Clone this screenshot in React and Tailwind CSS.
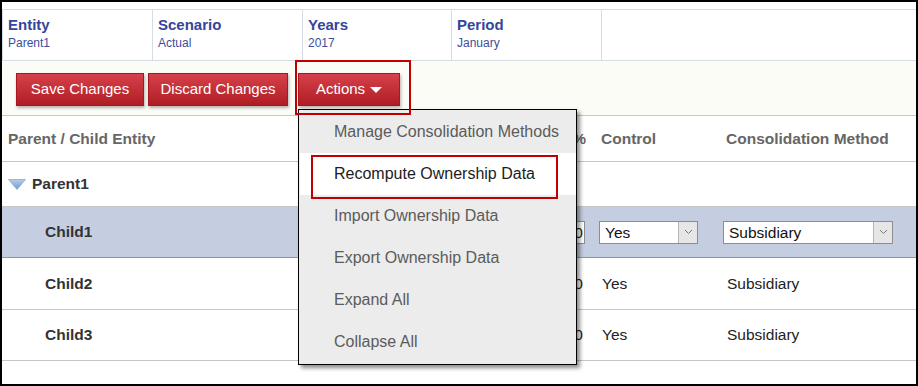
import React from "react";

function Caret() {
  return (
    <svg width="12" height="7" viewBox="0 0 12 7" className="ml-[5px] mt-[2px]">
      <polygon points="0,0 12,0 6,6" fill="#fff" />
    </svg>
  );
}

function Btn({ children, w }) {
  return (
    <div
      className={`${w} h-[33px] flex items-center justify-center text-white text-[15px] border border-[#a9161e] bg-gradient-to-b from-[#d6404a] to-[#b01c24] shadow-[1px_2px_3px_rgba(0,0,0,0.3)]`}
    >
      {children}
    </div>
  );
}

function Chevron() {
  return (
    <svg width="9" height="6" viewBox="0 0 9 6">
      <polyline points="1,1 4.5,4.5 8,1" fill="none" stroke="#777" strokeWidth="1" />
    </svg>
  );
}

function Select({ value, w }) {
  return (
    <div className={`${w} h-[23px] flex border border-[#8d8d8d] bg-white`}>
      <div className="flex-1 pl-[5px] text-[15.5px] leading-[21px] text-[#111]">{value}</div>
      <div className="w-[19px] flex items-center justify-center bg-[#e6e6e6] border-l border-[#b5b5b5]">
        <Chevron />
      </div>
    </div>
  );
}

function HeaderCell({ label, value, w }) {
  return (
    <div className={`${w} border-r border-[#d5dce4] pl-[5px] pt-[6px]`}>
      <div className="text-[15px] leading-[18px] font-bold text-[#34459a]">{label}</div>
      <div className="text-[12px] leading-[14px] mt-[2px] text-[#3c4d9e]">{value}</div>
    </div>
  );
}

function Row({ h, bg, border, label, pct, control, method, select }) {
  return (
    <div className={`flex items-center ${h} ${bg} border-b ${border}`}>
      <div className="w-[490px] pl-[43px] text-[15.5px] font-bold text-[#333]">{label}</div>
      <div className="w-[93px] flex justify-end text-[15.5px] text-[#222]">
        {select ? (
          <div className="h-[23px] w-[60px] border border-[#8d8d8d] bg-white text-right pr-[1px] leading-[21px]">{pct}</div>
        ) : (
          <div className="pr-[2px]">{pct}</div>
        )}
      </div>
      <div className="ml-[14px] w-[124px] text-[15.5px] text-[#222]">
        {select ? <Select value={control} w="w-[99px]" /> : <div className="pl-[3px]">{control}</div>}
      </div>
      <div className="flex-1 text-[15.5px] text-[#222]">
        {select ? <Select value={method} w="w-[170px]" /> : <div className="pl-[4px]">{method}</div>}
      </div>
    </div>
  );
}

const items = [
  "Manage Consolidation Methods",
  "Recompute Ownership Data",
  "Import Ownership Data",
  "Export Ownership Data",
  "Expand All",
  "Collapse All",
];

export default function App() {
  return (
    <div className="relative w-[918px] h-[386px] border-2 border-black bg-white overflow-hidden font-['Liberation_Sans',Arial,sans-serif]">
      <div className="pt-[7px]">
        <div className="flex h-[52px] border-y border-l border-[#d5dce4]">
          <HeaderCell label="Entity" value="Parent1" w="w-[150px]" />
          <HeaderCell label="Scenario" value="Actual" w="w-[150px]" />
          <HeaderCell label="Years" value="2017" w="w-[149px]" />
          <HeaderCell label="Period" value="January" w="w-[150px]" />
          <div className="flex-1" />
        </div>
      </div>

      <div className="flex items-start h-[55px] bg-[#fcfcf7] border-b border-[#c9c9c0] pl-[14px] pt-[12px]">
        <Btn w="w-[128px]">Save Changes</Btn>
        <div className="w-[4px]" />
        <Btn w="w-[140px]">Discard Changes</Btn>
        <div className="w-[10px]" />
        <Btn w="w-[102px]">
          Actions
          <Caret />
        </Btn>
      </div>

      <div className="flex items-center h-[46px] border-b border-[#c6c6c6]">
        <div className="w-[490px] pl-[6px] text-[15.5px] font-bold text-[#666]">Parent / Child Entity</div>
        <div className="w-[94px] flex justify-end text-[15.5px] font-bold text-[#666] whitespace-nowrap">
          <span className="shrink-0">Ownership %</span>
        </div>
        <div className="ml-[13px] w-[124px] pl-[2px] text-[15.5px] font-bold text-[#666]">Control</div>
        <div className="flex-1 pl-[3px] text-[15.5px] font-bold text-[#666]">Consolidation Method</div>
      </div>

      <div className="flex items-center h-[45px] border-b border-[#c6c6c6] pl-[6px]">
        <svg width="18" height="11" viewBox="0 0 18 11">
          <defs>
            <linearGradient id="tri" x1="0" y1="0" x2="0" y2="1">
              <stop offset="0" stopColor="#b5cde8" />
              <stop offset="1" stopColor="#6f9bcc" />
            </linearGradient>
          </defs>
          <polygon points="0.5,0.5 17.5,0.5 9,10.5" fill="url(#tri)" stroke="#8aa9cf" strokeWidth="0.8" />
        </svg>
        <div className="ml-[6px] text-[15.5px] font-bold text-[#333]">Parent1</div>
      </div>

      <Row h="h-[51px]" bg="bg-[#c5cde0]" border="border-[#8c95a8]" label="Child1" pct="100" control="Yes" method="Subsidiary" select />
      <Row h="h-[52px]" bg="bg-white" border="border-[#c6c6c6]" label="Child2" pct="100" control="Yes" method="Subsidiary" />
      <Row h="h-[51px]" bg="bg-white" border="border-[#c6c6c6]" label="Child3" pct="100" control="Yes" method="Subsidiary" />

      <div className="absolute left-[296px] top-[107px] w-[279px] h-[256px] border border-black bg-[#ececec] pt-px shadow-[3px_3px_4px_rgba(0,0,0,0.45)]">
        {items.map((t, i) =>
          i === 1 ? (
            <div key={t} className="relative h-[42px] ml-px bg-white flex items-center pl-[34px] text-[16px] text-[#1c1c1c]">
              {t}
              <div className="absolute left-[11px] top-[2px] w-[247px] h-[44px] border-2 border-[#c00000]" />
            </div>
          ) : (
            <div key={t} className="h-[42px] flex items-center pl-[35px] text-[16px] text-[#5b5b5b]">
              {t}
            </div>
          )
        )}
      </div>

      <div className="absolute left-[293px] top-[58px] w-[116px] h-[55px] border-2 border-[#c00000]" />
    </div>
  );
}
